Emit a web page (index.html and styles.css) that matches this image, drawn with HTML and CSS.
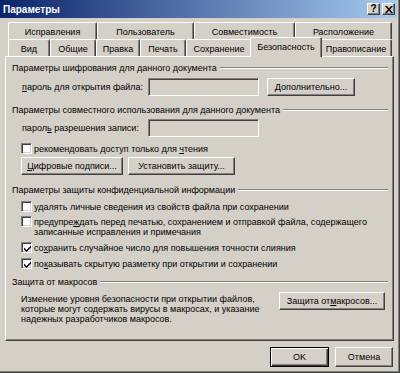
FILE: index.html
```html
<!DOCTYPE html>
<html lang="ru">
<head>
<meta charset="utf-8">
<title>Параметры</title>
<link rel="stylesheet" href="styles.css">
</head>
<body>
<div class="window">
  <div class="titlebar">
    <span class="title">Параметры</span>
    <div class="tb-btns">
      <span class="tb-btn help">?</span>
      <span class="tb-btn close"><svg width="8" height="7" viewBox="0 0 8 7"><path d="M0 0h2l2 2.5L6 0h2L5 3.5 8 7H6L4 4.5 2 7H0l3-3.5z" fill="#000"/></svg></span>
    </div>
  </div>
  <div class="body">
    <div class="tabs">
      <div class="tabrow">
        <div class="tab w89">Исправления</div>
        <div class="tab w97">Пользователь</div>
        <div class="tab w101">Совместимость</div>
        <div class="tab w97">Расположение</div>
      </div>
      <div class="tabrow">
        <div class="tab w42">Вид</div>
        <div class="tab w46">Общие</div>
        <div class="tab w44">Правка</div>
        <div class="tab w46">Печать</div>
        <div class="tab w66">Сохранение</div>
        <div class="tab sel">Безопасность</div>
        <div class="tab w72">Правописание</div>
      </div>
    </div>
    <div class="panel">
      <div class="grp g1">Параметры шифрования для данного документа</div>
      <div class="field f1">
        <span class="flabel"><u>п</u>ароль для открытия файла:</span>
        <span class="input"></span>
        <span class="btn wide">Дополнительно...</span>
      </div>
      <div class="grp g2">Параметры совместного использования для данного документа</div>
      <div class="field f2">
        <span class="flabel">парол<u>ь</u> разрешения записи:</span>
        <span class="input"></span>
      </div>
      <div class="check c0"><span class="box"></span><span class="ctext">рекомендовать доступ только для <u>ч</u>тения</span></div>
      <div class="btnrow">
        <span class="btn b1"><u>Ц</u>ифровые подписи...</span>
        <span class="btn b2">Установить защиту...</span>
      </div>
      <div class="grp g3">Параметры защиты конфиденциальной информации</div>
      <div class="check c1"><span class="box"></span><span class="ctext">у<u>д</u>алять личные сведения из свойств файла при сохранении</span></div>
      <div class="check c2"><span class="box"></span><span class="ctext">предупре<u>ж</u>дать перед печатью, сохранением и отправкой файла, содержащего<br>записанные исправления и примечания</span></div>
      <div class="check c3"><span class="box checked"><svg width="7" height="7" viewBox="0 0 7 7"><path d="M0 2.5l2.5 2.5L7 0.5v2L2.5 7 0 4.5z" fill="#000"/></svg></span><span class="ctext">со<u>х</u>ранить случайное число для повышения точности слияния</span></div>
      <div class="check c4"><span class="box checked"><svg width="7" height="7" viewBox="0 0 7 7"><path d="M0 2.5l2.5 2.5L7 0.5v2L2.5 7 0 4.5z" fill="#000"/></svg></span><span class="ctext">по<u>к</u>азывать скрытую разметку при открытии и сохранении</span></div>
      <div class="grp g4">Защита от макросов</div>
      <div class="macro">
        <p class="mtext">Изменение уровня безопасности при открытии файлов,<br>которые могут содержать вирусы в макросах, и указание<br>надежных разработчиков макросов.</p>
        <span class="btn mbtn">Защита от <u>м</u>акросов...</span>
      </div>
    </div>
    <div class="footer">
      <span class="btn ok">OK</span>
      <span class="btn cancel">Отмена</span>
    </div>
  </div>
</div>
</body>
</html>
```

FILE: styles.css
```css
html, body {
  margin: 0;
  padding: 0;
  background: #d4d0c8;
}
body {
  font-family: "Liberation Sans", Arial, sans-serif;
  font-size: 9px;
  color: #000;
}
.window {
  width: 400px;
  height: 373px;
  box-sizing: border-box;
  background: #d4d0c8;
  border-right: 1px solid #404040;
  border-bottom: 1px solid #404040;
  box-shadow: inset -1px -1px #808080;
  display: flex;
  flex-direction: column;
  overflow: hidden;
}
.titlebar {
  height: 18px;
  margin-right: 2px;
  background: linear-gradient(to right, #0a246a, #a6caf0);
  display: flex;
  align-items: center;
  justify-content: space-between;
  padding-left: 3px;
}
.title {
  color: #fff;
  font-weight: bold;
  font-size: 10px;
}
.tb-btns {
  display: flex;
  gap: 2px;
  margin-right: 2px;
}
.tb-btn {
  box-sizing: border-box;
  width: 13px;
  height: 12px;
  background: #d4d0c8;
  border-top: 1px solid #fff;
  border-left: 1px solid #fff;
  border-right: 1px solid #404040;
  border-bottom: 1px solid #404040;
  box-shadow: inset -1px -1px #808080;
  display: flex;
  align-items: center;
  justify-content: center;
  font-weight: bold;
  font-size: 10px;
  line-height: 10px;
}
.body {
  padding-top: 4px;
  display: flex;
  flex-direction: column;
}
.tabs {
  margin-left: 8px;
  width: 384px;
  display: flex;
  flex-direction: column;
}
.tabrow {
  display: flex;
  height: 17px;
}
.tab {
  box-sizing: border-box;
  height: 17px;
  background: #d4d0c8;
  border-top: 1px solid #fff;
  border-left: 1px solid #fff;
  border-right: 1px solid #404040;
  border-radius: 2px 2px 0 0;
  box-shadow: inset -1px 0 #808080;
  display: flex;
  align-items: center;
  justify-content: center;
  white-space: nowrap;
  padding-top: 1px;
}
.w42 { width: 42px; }
.w44 { width: 44px; }
.w46 { width: 46px; }
.w66 { width: 66px; }
.w72 { width: 72px; }
.w89 { width: 89px; }
.w97 { width: 97px; }
.w101 { width: 101px; }
.tab.sel {
  width: 72px;
  height: 20px;
  margin: -2px -2px -1px -2px;
  align-self: flex-start;
  z-index: 2;
  padding-top: 0;
  padding-bottom: 2px;
}
.panel {
  box-sizing: border-box;
  margin-left: 5px;
  width: 389px;
  height: 285px;
  border-top: 1px solid #fff;
  border-left: 1px solid #fff;
  border-right: 1px solid #404040;
  border-bottom: 1px solid #404040;
  box-shadow: inset -1px -1px #808080;
  padding: 0 5px 0 6px;
  display: flex;
  flex-direction: column;
}
.grp {
  display: flex;
  align-items: center;
  gap: 3px;
  height: 12px;
  line-height: 12px;
  white-space: nowrap;
}
.grp::after {
  content: "";
  flex: 1;
  height: 0;
  border-top: 1px solid #808080;
  border-bottom: 1px solid #fff;
}
.g1 { margin-top: 5px; }
.g2 { margin-top: 8px; }
.g3 { margin-top: 9px; }
.g4 { margin-top: 7px; }
.field {
  display: flex;
  align-items: center;
  padding-left: 10px;
  height: 18px;
}
.f1 { margin-top: 4px; }
.f2 { margin-top: 3px; }
.flabel {
  width: 126px;
  white-space: nowrap;
}
.input {
  box-sizing: border-box;
  width: 111px;
  height: 18px;
  background: #d4d0c8;
  border-top: 1px solid #808080;
  border-left: 1px solid #808080;
  border-right: 1px solid #fff;
  border-bottom: 1px solid #fff;
  box-shadow: inset 1px 1px #404040, inset -1px -1px #d4d0c8;
}
.btn {
  box-sizing: border-box;
  height: 18px;
  background: #d4d0c8;
  border-top: 1px solid #fff;
  border-left: 1px solid #fff;
  border-right: 1px solid #404040;
  border-bottom: 1px solid #404040;
  box-shadow: inset -1px -1px #808080;
  display: flex;
  align-items: center;
  justify-content: center;
  white-space: nowrap;
}
.btn.wide {
  width: 88px;
  margin-left: 8px;
}
.check {
  display: flex;
  align-items: flex-start;
  padding-left: 9px;
  line-height: 10px;
  white-space: nowrap;
}
.box {
  box-sizing: border-box;
  flex: none;
  width: 11px;
  height: 11px;
  background: #fff;
  border-top: 1px solid #808080;
  border-left: 1px solid #808080;
  border-right: 1px solid #fff;
  border-bottom: 1px solid #fff;
  box-shadow: inset 1px 1px #404040, inset -1px -1px #d4d0c8;
  display: flex;
  align-items: center;
  justify-content: center;
  margin-right: 2px;
}
.box svg { margin: 1px 0 0 1px; }
.ctext {
  padding-top: 1px;
}
.c0 { margin-top: 6px; }
.c1 { margin-top: 5px; }
.c2 { margin-top: 4px; }
.c3 { margin-top: 5px; }
.c4 { margin-top: 5px; }
.btnrow {
  display: flex;
  gap: 5px;
  padding-left: 9px;
  margin-top: 3px;
}
.b1 { width: 102px; }
.b2 { width: 107px; }
.macro {
  display: flex;
  align-items: flex-start;
  padding-left: 9px;
  margin-top: 4px;
}
.mtext {
  margin: 2px 0 0;
  width: 250px;
  line-height: 10px;
  white-space: nowrap;
}
.mbtn {
  width: 106px;
  height: 18px;
  margin-left: 8px;
}
.footer {
  display: flex;
  justify-content: flex-end;
  gap: 6px;
  margin-top: 6px;
  padding-right: 6px;
}
.footer .btn {
  height: 20px;
}
.ok {
  width: 59px;
  border: 1px solid #000;
  box-shadow: inset 1px 1px #fff, inset -1px -1px #404040, inset -2px -2px #808080;
}
.cancel {
  width: 58px;
}
```
